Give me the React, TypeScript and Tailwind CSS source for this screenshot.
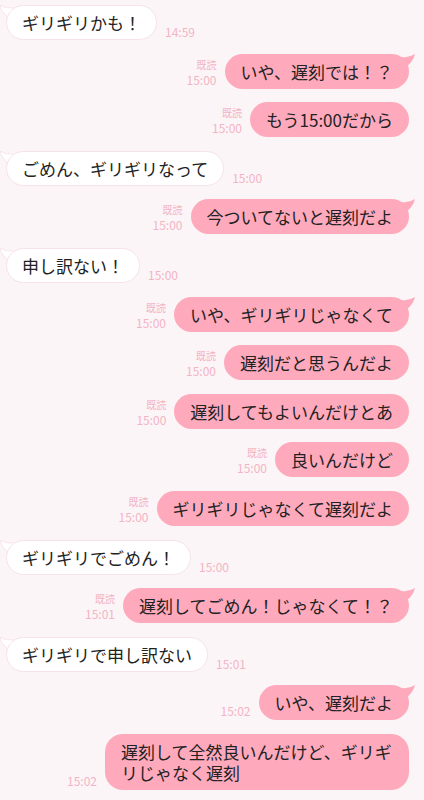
type Msg = {
  side: "left" | "right";
  text: string;
  time: string;
  read?: boolean;
  tail?: boolean;
};

const messages: Msg[] = [
  { side: "left", text: "ギリギリかも！", time: "14:59", tail: true },
  { side: "right", text: "いや、遅刻では！？", time: "15:00", read: true, tail: true },
  { side: "right", text: "もう15:00だから", time: "15:00", read: true },
  { side: "left", text: "ごめん、ギリギリなって", time: "15:00", tail: true },
  { side: "right", text: "今ついてないと遅刻だよ", time: "15:00", read: true, tail: true },
  { side: "left", text: "申し訳ない！", time: "15:00", tail: true },
  { side: "right", text: "いや、ギリギリじゃなくて", time: "15:00", read: true, tail: true },
  { side: "right", text: "遅刻だと思うんだよ", time: "15:00", read: true },
  { side: "right", text: "遅刻してもよいんだけとあ", time: "15:00", read: true },
  { side: "right", text: "良いんだけど", time: "15:00", read: true },
  { side: "right", text: "ギリギリじゃなくて遅刻だよ", time: "15:00", read: true },
  { side: "left", text: "ギリギリでごめん！", time: "15:00", tail: true },
  { side: "right", text: "遅刻してごめん！じゃなくて！？", time: "15:01", read: true, tail: true },
  { side: "left", text: "ギリギリで申し訳ない", time: "15:01", tail: true },
  { side: "right", text: "いや、遅刻だよ", time: "15:02", tail: true },
  { side: "right", text: "遅刻して全然良いんだけど、ギリギリじゃなく遅刻", time: "15:02" },
];

const RightTail = () => (
  <svg
    className="absolute right-[-7px] top-[0px]"
    width="14"
    height="14"
    viewBox="0 0 14 14"
  >
    <path d="M0 3 Q7 4 13 0 Q11 8 4 13 L0 13 Z" fill="#ffa9bc" />
  </svg>
);

const LeftTail = () => (
  <svg
    className="absolute left-[-7px] top-[0px]"
    width="14"
    height="14"
    viewBox="0 0 14 14"
  >
    <path
      d="M14 3 Q7 4 1 0 Q3 8 10 13"
      fill="#ffffff"
      stroke="#f6e3ea"
      strokeWidth="1"
    />
    <path d="M14 3.6 Q7 4.6 2 1.2 Q4 8 10.5 12.5 L14 14 Z" fill="#ffffff" />
  </svg>
);

const Row = ({ msg }: { msg: Msg }) => {
  if (msg.side === "left") {
    return (
      <div className="flex items-end pl-[6px]">
        <div className="relative">
          {msg.tail && <LeftTail />}
          <div className="relative rounded-[18px] border border-[#f6e3ea] bg-white px-[15px] py-[6px] text-[17px] leading-[21px] text-[#222]">
            {msg.text}
          </div>
        </div>
        <div className="mb-[1px] ml-[8px] text-[12px] leading-[15px] text-[#f3b4c4]">
          {msg.time}
        </div>
      </div>
    );
  }
  return (
    <div className="flex items-end justify-end pr-[15px]">
      <div className="mb-[2px] mr-[8px] flex flex-col items-end text-[12px] leading-[15px] text-[#f3b4c4]">
        {msg.read && <span className="text-[10px] leading-[15px]">既読</span>}
        <span>{msg.time}</span>
      </div>
      <div className="relative">
        {msg.tail && <RightTail />}
        <div className="relative max-w-[304px] rounded-[18px] bg-[#ffa9bc] px-[16px] py-[7px] text-[17px] leading-[21px] text-[#222]">
          {msg.text}
        </div>
      </div>
    </div>
  );
};

export default function App() {
  return (
    <div
      className="flex min-h-[800px] w-[424px] flex-col gap-[13.6px] overflow-hidden bg-[#fcf5f7] pt-[5px]"
      style={{ fontFamily: '"Noto Sans CJK JP", "Noto Sans", sans-serif' }}
    >
      {messages.map((m, i) => (
        <Row key={i} msg={m} />
      ))}
    </div>
  );
}
